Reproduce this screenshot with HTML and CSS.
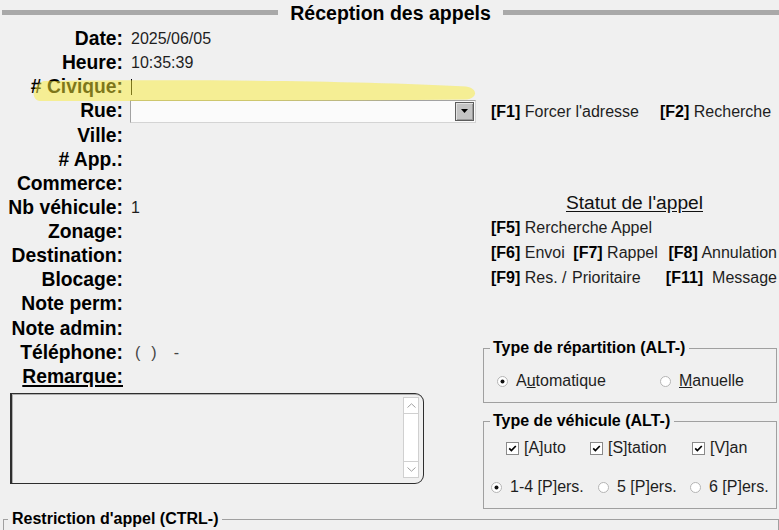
FILE: index.html
```html
<!DOCTYPE html>
<html lang="fr">
<head>
<meta charset="utf-8">
<title>Réception des appels</title>
<link rel="stylesheet" href="styles.css">
</head>
<body>
<div class="screen">
  <header class="title-bar">
    <span class="bar"></span>
    <h1 class="title">Réception des appels</h1>
    <span class="bar"></span>
  </header>

  <main class="main">
    <section class="form">
      <div class="fields">
        <span class="lbl">Date:</span><span class="val">2025/06/05</span>
        <span class="lbl">Heure:</span><span class="val">10:35:39</span>
        <span class="lbl"># Civique:</span><span class="val"><span class="caret"></span></span>
        <span class="lbl">Rue:</span>
        <span class="val val-flush">
          <span class="combo">
            <span class="combo-btn">
              <svg width="7" height="4" viewBox="0 0 7 4"><path d="M0 0H7L3.5 4Z" fill="#000"/></svg>
            </span>
          </span>
        </span>
        <span class="lbl">Ville:</span><span class="val"></span>
        <span class="lbl"># App.:</span><span class="val"></span>
        <span class="lbl">Commerce:</span><span class="val"></span>
        <span class="lbl">Nb véhicule:</span><span class="val">1</span>
        <span class="lbl">Zonage:</span><span class="val"></span>
        <span class="lbl">Destination:</span><span class="val"></span>
        <span class="lbl">Blocage:</span><span class="val"></span>
        <span class="lbl">Note perm:</span><span class="val"></span>
        <span class="lbl">Note admin:</span><span class="val"></span>
        <span class="lbl">Téléphone:</span>
        <span class="val phone"><span class="ph ph1">(</span><span class="ph ph2">)</span><span class="ph ph3">-</span></span>
        <span class="lbl lbl-u">Remarque:</span><span class="val"></span>
      </div>

      <div class="memo">
        <div class="scroll">
          <span class="sbtn">
            <svg width="9" height="5" viewBox="0 0 9 5"><path d="M0.5 4.5L4.5 0.8L8.5 4.5" fill="none" stroke="#a0a0a0"/></svg>
          </span>
          <span class="strack"></span>
          <span class="sbtn">
            <svg width="9" height="5" viewBox="0 0 9 5"><path d="M0.5 0.5L4.5 4.2L8.5 0.5" fill="none" stroke="#a0a0a0"/></svg>
          </span>
        </div>
      </div>
    </section>

    <aside class="side">
      <div class="keys row-f1">
        <span class="kw-f1"><b>[F1]</b> Forcer l'adresse</span><span><b>[F2]</b> Recherche</span>
      </div>

      <div class="status-title">Statut de l'appel</div>
      <div class="keys"><span><b>[F5]</b> Rercherche Appel</span></div>
      <div class="keys">
        <span class="kw-a"><b>[F6]</b> Envoi</span><span class="kw-b"><b>[F7]</b> Rappel</span><span class="kw-c"><b>[F8]</b> Annulation</span>
      </div>
      <div class="keys">
        <span class="kw-a"><b>[F9]</b> Res. /</span><span class="kw-b">Prioritaire</span><span class="kw-c"><b>[F11]</b>&nbsp; Message</span>
      </div>

      <fieldset class="group g-rep">
        <legend>Type de répartition (ALT-)</legend>
        <div class="opts opts-rep">
          <span class="opt o-auto">
            <svg class="radio" viewBox="0 0 11 11"><circle cx="5.5" cy="5.5" r="5" fill="#fff" stroke="#b4b4b4"/><circle cx="5.5" cy="5.5" r="2" fill="#111"/></svg>
            <span>A<u>u</u>tomatique</span>
          </span>
          <span class="opt">
            <svg class="radio" viewBox="0 0 11 11"><circle cx="5.5" cy="5.5" r="5" fill="#fff" stroke="#b4b4b4"/></svg>
            <span><u>M</u>anuelle</span>
          </span>
        </div>
      </fieldset>

      <fieldset class="group g-veh">
        <legend>Type de véhicule (ALT-)</legend>
        <div class="opts opts-chk">
          <span class="opt chk c-auto">
            <svg class="check" viewBox="0 0 13 13"><rect x="0.5" y="0.5" width="12" height="12" fill="#fff" stroke="#8a8a8a"/><path d="M3.2 6.4L5.4 8.6L9.8 4" fill="none" stroke="#000" stroke-width="1.7"/></svg>
            <span>[A]uto</span>
          </span>
          <span class="opt chk c-stat">
            <svg class="check" viewBox="0 0 13 13"><rect x="0.5" y="0.5" width="12" height="12" fill="#fff" stroke="#8a8a8a"/><path d="M3.2 6.4L5.4 8.6L9.8 4" fill="none" stroke="#000" stroke-width="1.7"/></svg>
            <span>[S]tation</span>
          </span>
          <span class="opt chk">
            <svg class="check" viewBox="0 0 13 13"><rect x="0.5" y="0.5" width="12" height="12" fill="#fff" stroke="#8a8a8a"/><path d="M3.2 6.4L5.4 8.6L9.8 4" fill="none" stroke="#000" stroke-width="1.7"/></svg>
            <span>[V]an</span>
          </span>
        </div>
        <div class="opts opts-pers">
          <span class="opt p-1">
            <svg class="radio" viewBox="0 0 11 11"><circle cx="5.5" cy="5.5" r="5" fill="#fff" stroke="#b4b4b4"/><circle cx="5.5" cy="5.5" r="2" fill="#111"/></svg>
            <span>1-4 [P]ers.</span>
          </span>
          <span class="opt p-5">
            <svg class="radio" viewBox="0 0 11 11"><circle cx="5.5" cy="5.5" r="5" fill="#fff" stroke="#b4b4b4"/></svg>
            <span>5 [P]ers.</span>
          </span>
          <span class="opt">
            <svg class="radio" viewBox="0 0 11 11"><circle cx="5.5" cy="5.5" r="5" fill="#fff" stroke="#b4b4b4"/></svg>
            <span>6 [P]ers.</span>
          </span>
        </div>
      </fieldset>
    </aside>

    <svg class="highlight" width="452" height="28" viewBox="0 0 452 28">
      <path d="M16 5 C 150 3, 330 4.5, 438 10.5 C 450 12.5, 450 22, 438 23.5 C 300 25, 150 25.2, 12 25 C 3 24.5, 3 9, 16 5 Z" fill="rgba(250,236,55,0.5)"/>
    </svg>
  </main>

  <fieldset class="group restrict">
    <legend>Restriction d'appel (CTRL-)</legend>
  </fieldset>
</div>
</body>
</html>
```

FILE: styles.css
```css
* {
  box-sizing: border-box;
}

html,
body {
  margin: 0;
  padding: 0;
}

body {
  background: #f0f0f0;
  font-family: "Liberation Sans", Arial, sans-serif;
  color: #000;
}

.screen {
  width: 779px;
  height: 530px;
  overflow: hidden;
}

/* ---------- header ---------- */
.title-bar {
  display: flex;
  align-items: flex-start;
  height: 27px;
  padding-left: 2px;
}

.title-bar .bar {
  flex: 1;
  height: 5px;
  margin-top: 10px;
  background: #a9a9a9;
}

.title {
  margin: 2px 12px 0 12px;
  font-size: 19.5px;
  line-height: 22px;
  font-weight: bold;
  white-space: nowrap;
}

/* ---------- main ---------- */
.main {
  position: relative;
  display: grid;
  grid-template-columns: 483px 296px;
  height: 483px;
}

.fields {
  display: grid;
  grid-template-columns: 123px 1fr;
  column-gap: 7px;
  grid-auto-rows: 24.14px;
  align-items: center;
}

.lbl {
  text-align: right;
  font-size: 19.3px;
  line-height: 22px;
  font-weight: bold;
  white-space: nowrap;
}

.lbl-u {
  text-decoration: underline;
  text-decoration-thickness: 2px;
  text-underline-offset: 2px;
}

.val {
  display: flex;
  align-items: center;
  height: 100%;
  padding-left: 1px;
  font-size: 16px;
  color: #1e1e1e;
}

.val-flush {
  padding-left: 0;
}

.caret {
  width: 1px;
  height: 16px;
  background: #000;
}

.combo {
  display: flex;
  justify-content: flex-end;
  align-items: center;
  width: 346px;
  height: 23px;
  padding-right: 1px;
  background: #fbfbfb;
  border: 1px solid #a2a2a2;
  border-right-color: #d4d4d4;
  border-bottom-color: #d4d4d4;
}

.combo-btn {
  display: flex;
  align-items: center;
  justify-content: center;
  width: 19px;
  height: 19px;
  background: #c4c4c4;
  border: 1px solid #5c5c5c;
  box-shadow: inset 1px 1px 0 #e2e2e2, inset -1px -1px 0 #9a9a9a;
}

.phone .ph {
  color: #444;
}

.ph1 {
  margin-left: 4px;
}

.ph2 {
  margin-left: 11px;
}

.ph3 {
  margin-left: 17px;
}

/* remark box */
.memo {
  display: flex;
  justify-content: flex-end;
  width: 414px;
  height: 91px;
  margin: 4px 0 0 10px;
  padding: 3px 4px 5px 0;
  border: 1px solid #2e2e2e;
  border-left-width: 2px;
  border-radius: 0 9px 9px 0;
  box-shadow: inset 1px 1px 0 #b0b0b0;
}

.scroll {
  display: flex;
  flex-direction: column;
  width: 16px;
  background: #fff;
  border: 1px solid #d0d0d0;
}

.sbtn {
  display: flex;
  align-items: center;
  justify-content: center;
  height: 16px;
  border-bottom: 1px solid #d0d0d0;
}

.sbtn:last-child {
  border-bottom: 0;
  border-top: 1px solid #d0d0d0;
}

.strack {
  flex: 1;
}

/* ---------- right side ---------- */
.side {
  padding-right: 2px;
}

.keys {
  display: flex;
  padding-left: 8px;
  font-size: 16px;
  line-height: 25px;
  color: #1e1e1e;
  white-space: nowrap;
}

.keys b {
  color: #000;
}

.row-f1 {
  margin-top: 72px;
}

.kw-f1 {
  width: 169px;
}

.kw-a {
  width: 83px;
}

.kw-b {
  width: 95px;
}

.kw-c {
  margin-left: 1px;
}

.status-title {
  margin-top: 67px;
  padding-left: 9px;
  font-size: 19.2px;
  line-height: 24px;
  text-align: center;
  text-decoration: underline;
  text-underline-offset: 2px;
  color: #111;
}

/* group boxes */
.group {
  margin: 0;
  padding: 0;
  border: 1px solid #a0a0a0;
  min-width: 0;
}

.group legend {
  margin-left: 6px;
  padding: 0 4px 0 3px;
  font-size: 16px;
  line-height: 18px;
  font-weight: bold;
  white-space: nowrap;
}

.g-rep {
  margin-top: 49px;
  padding: 12px 0 9px 0;
}

.g-veh {
  margin-top: 9px;
  padding: 6px 0 9px 0;
}

.opts {
  display: flex;
  align-items: center;
  height: 24px;
  font-size: 16px;
  color: #1e1e1e;
  white-space: nowrap;
}

.opt {
  display: flex;
  align-items: center;
  gap: 8px;
}

.opt.chk {
  gap: 5px;
}

.radio {
  width: 11px;
  height: 11px;
  flex: none;
}

.check {
  width: 13px;
  height: 13px;
  flex: none;
}

.opts-rep {
  padding-left: 13px;
}

.o-auto {
  width: 163px;
}

.opts-chk {
  padding-left: 22px;
}

.c-auto {
  width: 84px;
}

.c-stat {
  width: 102px;
}

.opts-pers {
  margin-top: 15px;
  padding-left: 7px;
}

.p-1 {
  width: 107px;
}

.p-5 {
  width: 92px;
}

/* highlight marker over "# Civique" */
.highlight {
  position: absolute;
  left: 28px;
  top: 49px;
  pointer-events: none;
}

/* bottom group */
.restrict {
  height: 40px;
  margin-left: 3px;
}

.restrict legend {
  margin-left: 4px;
  padding: 0 4px;
}
```
